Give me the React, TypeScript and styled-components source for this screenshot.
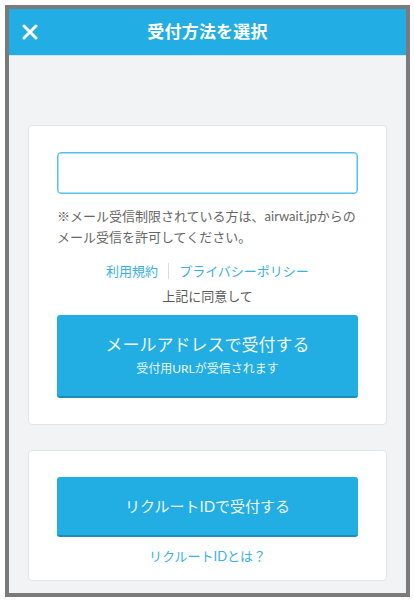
import React from 'react';
import styled, { createGlobalStyle } from 'styled-components';

const GlobalStyle = createGlobalStyle`
   html, body {
      margin: 0;
      padding: 0;
      background: #fff;
   }
   body {
      font-family: "Lato", "Noto Sans CJK JP", sans-serif;
      -webkit-font-smoothing: antialiased;
   }
   * {
      box-sizing: border-box;
   }
`;

const Frame = styled.div`
   margin: 5px 0 0 5px;
   width: 405px;
   height: 592px;
   border: 4px solid #7b7b7b;
   background-color: #f2f3f5;
   display: flex;
   flex-direction: column;
`;

const Header = styled.header`
   height: 47px;
   flex: 0 0 47px;
   background-color: #22aee5;
   border-bottom: 1px solid #c9e8f6;
   display: grid;
   grid-template-columns: 60px 1fr 60px;
   align-items: center;
`;

const CloseButton = styled.button`
   justify-self: start;
   margin-left: 13px;
   padding: 0;
   border: none;
   background: none;
   width: 16px;
   height: 16px;
   display: flex;
   cursor: pointer;
`;

const Title = styled.h1`
   margin: 0;
   text-align: center;
   color: #fff;
   font-size: 17px;
   font-weight: 700;
   line-height: 24px;
   letter-spacing: 0.2px;
`;

const Body = styled.main`
   flex: 1;
   padding: 69px 19px 0;
   display: flex;
   flex-direction: column;
   gap: 25px;
`;

const Card = styled.section<{ $bottom: number }>`
   background-color: #fff;
   border: 1px solid #e2e4e7;
   border-radius: 4px;
   padding: 26px 28px ${p => p.$bottom}px;
   display: flex;
   flex-direction: column;
`;

const EmailInput = styled.input`
   height: 42px;
   width: 100%;
   border: 1px solid #52c0f0;
   border-radius: 4px;
   padding: 0 12px;
   font-size: 15px;
   font-family: inherit;
   outline: none;
   box-shadow: inset 0 0 0 0.5px #52c0f0;
`;

const Notice = styled.p`
   margin: 12px 0 0;
   font-size: 13px;
   line-height: 21px;
   color: #666;
`;

const Links = styled.div`
   margin-top: 13px;
   display: flex;
   justify-content: center;
   align-items: center;
   line-height: 20px;
`;

const TextLink = styled.a<{ $top?: number }>`
   display: block;
   margin-top: ${p => p.$top || 0}px;
   text-align: center;
   font-size: 13px;
   line-height: 20px;
   color: #38b0e6;
   text-decoration: none;
`;

const Divider = styled.span`
   width: 1px;
   height: 16px;
   margin: 0 10px;
   background-color: #dcdcdc;
`;

const Agree = styled.div`
   margin-top: 5px;
   text-align: center;
   font-size: 13px;
   line-height: 20px;
   color: #5a5a5a;
`;

const PrimaryButton = styled.button<{ $height: number; $top?: number }>`
   margin-top: ${p => p.$top || 0}px;
   height: ${p => p.$height}px;
   width: 100%;
   border: none;
   border-bottom: 2px solid #1b8dbf;
   border-radius: 3px;
   background-color: #22ade3;
   color: #eef8fd;
   font-family: inherit;
   display: flex;
   flex-direction: column;
   justify-content: center;
   align-items: center;
   gap: 3px;
   cursor: pointer;
`;

const ButtonLabel = styled.span<{ $size: number }>`
   font-size: ${p => p.$size}px;
   line-height: 24px;
`;

const ButtonSub = styled.span`
   font-size: 12px;
   line-height: 18px;
`;

const CloseIcon = () => (
   <svg width="16" height="16" viewBox="0 0 16 16">
      <path d="M2 2 L14 14 M14 2 L2 14" stroke="#fff" strokeWidth="3" strokeLinecap="round" />
   </svg>
);

export default function App() {
   return (
      <>
         <GlobalStyle />
         <Frame>
            <Header>
               <CloseButton aria-label="閉じる"><CloseIcon /></CloseButton>
               <Title>受付方法を選択</Title>
               <span />
            </Header>
            <Body>
               <Card $bottom={26}>
                  <EmailInput type="email" />
                  <Notice>※メール受信制限されている方は、airwait.jpからのメール受信を許可してください。</Notice>
                  <Links>
                     <TextLink href="#">利用規約</TextLink>
                     <Divider />
                     <TextLink href="#">プライバシーポリシー</TextLink>
                  </Links>
                  <Agree>上記に同意して</Agree>
                  <PrimaryButton $height={83} $top={9}>
                     <ButtonLabel $size={17}>メールアドレスで受付する</ButtonLabel>
                     <ButtonSub>受付用URLが受信されます</ButtonSub>
                  </PrimaryButton>
               </Card>
               <Card $bottom={14}>
                  <PrimaryButton $height={60}>
                     <ButtonLabel $size={15}>リクルートIDで受付する</ButtonLabel>
                  </PrimaryButton>
                  <TextLink href="#" $top={9}>リクルートIDとは？</TextLink>
               </Card>
            </Body>
         </Frame>
      </>
   );
}
